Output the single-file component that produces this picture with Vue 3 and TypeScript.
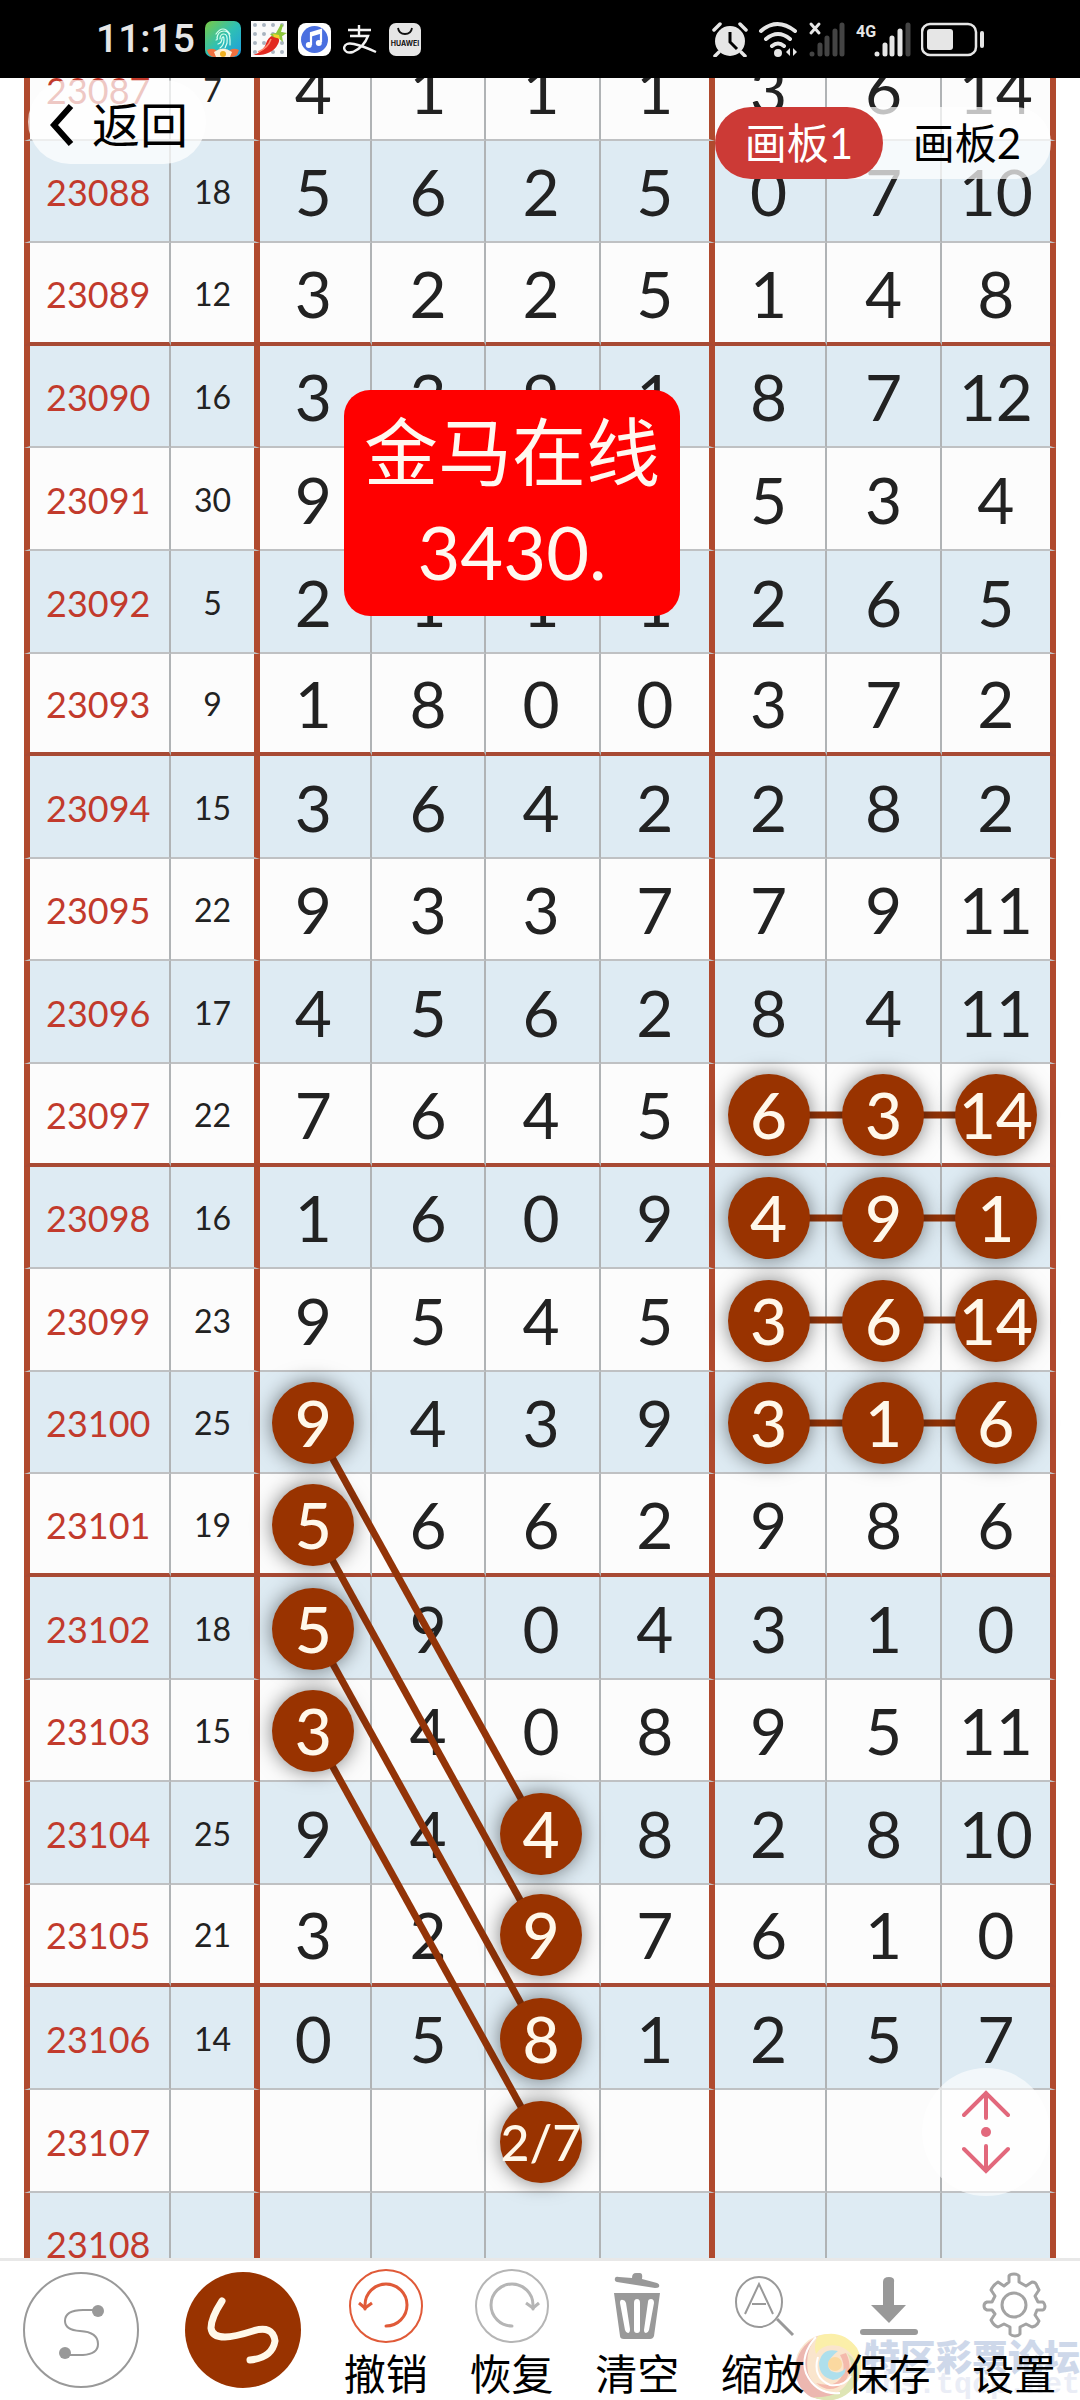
<script setup lang="ts">
interface Row {
  issue: string
  sum: string
  cells: string[]
}

interface Point {
  row: number
  col: number
}

const source: [string, string, string][] = [
  ['23087', '7', '4 1 1 1 3 6 14'],
  ['23088', '18', '5 6 2 5 0 7 10'],
  ['23089', '12', '3 2 2 5 1 4 8'],
  ['23090', '16', '3 3 9 1 8 7 12'],
  ['23091', '30', '9 8 7 6 5 3 4'],
  ['23092', '5', '2 1 1 1 2 6 5'],
  ['23093', '9', '1 8 0 0 3 7 2'],
  ['23094', '15', '3 6 4 2 2 8 2'],
  ['23095', '22', '9 3 3 7 7 9 11'],
  ['23096', '17', '4 5 6 2 8 4 11'],
  ['23097', '22', '7 6 4 5 6 3 14'],
  ['23098', '16', '1 6 0 9 4 9 1'],
  ['23099', '23', '9 5 4 5 3 6 14'],
  ['23100', '25', '9 4 3 9 3 1 6'],
  ['23101', '19', '5 6 6 2 9 8 6'],
  ['23102', '18', '5 9 0 4 3 1 0'],
  ['23103', '15', '3 4 0 8 9 5 11'],
  ['23104', '25', '9 4 4 8 2 8 10'],
  ['23105', '21', '3 2 9 7 6 1 0'],
  ['23106', '14', '0 5 8 1 2 5 7'],
  ['23107', '', '- - 2/7 - - - -'],
  ['23108', '', '- - - - - - -'],
]

const rows: Row[] = source.map(([issue, sum, cells]) => ({
  issue,
  sum,
  cells: cells.split(' ').map((c) => (c === '-' ? '' : c)),
}))

// Each stroke joins two marked cells; row and col are indexes into the table
const strokes: [Point, Point][] = [
  ...[10, 11, 12, 13].map((row): [Point, Point] => [{ row, col: 4 }, { row, col: 6 }]),
  ...[13, 14, 15, 16].map((row): [Point, Point] => [{ row, col: 0 }, { row: row + 4, col: 2 }]),
]

const marked = new Set<string>()
for (const [a, b] of strokes) {
  marked.add(`${a.row}:${a.col}`)
  marked.add(`${b.row}:${b.col}`)
  if (a.row === b.row) marked.add(`${a.row}:5`)
}
const isMarked = (row: number, col: number): boolean => marked.has(`${row}:${col}`)

const centers = ['28%', '39%', '50%', '61%', '72%', '83%', '94%']
const centerY = (row: number): number => Math.round((row * 513) / 5) + 51

const tools = [
  { id: 'undo', label: '撤销' },
  { id: 'redo', label: '恢复' },
  { id: 'clear', label: '清空' },
  { id: 'zoom', label: '缩放' },
  { id: 'save', label: '保存' },
  { id: 'settings', label: '设置' },
]
</script>

<template>
  <div class="app">
    <header class="status">
      <div class="status-side">
        <span class="clock">11:15</span>
        <svg class="s36" viewBox="0 0 36 36">
          <defs>
            <linearGradient id="fp" x1="0" y1="0" x2="1" y2="1">
              <stop offset="0" stop-color="#7ac943" />
              <stop offset="0.5" stop-color="#2fc0b4" />
              <stop offset="1" stop-color="#1e9be0" />
            </linearGradient>
          </defs>
          <rect width="36" height="36" rx="7" fill="url(#fp)" />
          <g fill="none" stroke="#d8fff0" stroke-width="1.2" stroke-linecap="round">
            <path d="M11 13q7-10 14 0M12 17q1-7 7-7t6 9v5M15 18q0-5 4-5t3 9l-2 5M13 23q4-1 4-6 2-3 2 2 0 5-4 8M11 19q2 0 1-3" />
          </g>
          <path d="M2 29q6-3 10 1 6-4 12 0 4-4 10-1l-2 5q-3 2-6 2H9q-5 0-7-7z" fill="#f2703f" />
          <path d="M9 31q9-7 18 0l-2 5H11z" fill="#fff0d8" />
          <circle cx="18" cy="33" r="3" fill="#f0b020" />
        </svg>
        <svg class="s36" viewBox="0 0 36 36">
          <rect width="36" height="36" fill="#fafafa" />
          <g fill="#a9b4c0">
            <circle v-for="n in 16" :key="n" :cx="4 + ((n - 1) % 4) * 9" :cy="4 + Math.floor((n - 1) / 4) * 9" r="2" />
          </g>
          <path d="M2 34q11-3 14-14 3-6 9-6 5 3 2 9-6 12-25 11z" fill="#e2281f" />
          <path d="M7 31q10-4 13-13" fill="none" stroke="#ff8a70" stroke-width="1.5" />
          <path d="M19 13l6-1 5-9 2 1-2 7 6 1-5 3 1 6-5-4-5-1z" fill="#8cc63a" />
          <path d="M22 13l6 1 1 4-6-2z" fill="#f3d22d" />
        </svg>
        <svg class="s36" viewBox="0 0 36 36">
          <rect x="1" y="2" width="33" height="33" rx="8" fill="#fff" />
          <circle cx="17.500" cy="18.500" r="13.500" fill="#4a6fe0" />
          <path d="M14 24V12l10-3v12" fill="none" stroke="#fff" stroke-width="2.200" />
          <path d="M14 14l10-3" stroke="#fff" stroke-width="3" />
          <circle cx="11.800" cy="24" r="3" fill="#fff" />
          <circle cx="21.800" cy="22" r="3" fill="#fff" />
        </svg>
        <svg class="s36" viewBox="0 0 36 36" fill="none" stroke="#f2f2f2" stroke-width="2.400">
          <path d="M5 9h23M16 4v10M7 15h18q-4 11-15 16-8 2-9-4 1-6 10-4 9 2 22 8" />
        </svg>
        <svg class="s36" viewBox="0 0 36 36">
          <rect x="0" y="2" width="32" height="33" rx="7" fill="#e6e6e6" />
          <path d="M9 7q1 6 7 6t7-6" fill="none" stroke="#111" stroke-width="1.800" />
          <text x="16" y="25" text-anchor="middle" class="brand">HUAWEI</text>
        </svg>
      </div>
      <div class="status-side">
        <svg class="s36" viewBox="0 0 36 36">
          <circle cx="18" cy="20" r="15" fill="#e6e6e6" />
          <path d="M2 9l6-6M34 9l-6-6M7 31l-4 4M29 31l4 4" stroke="#e6e6e6" stroke-width="3.500" stroke-linecap="round" />
          <path d="M18 11v10l7 7" fill="none" stroke="#000" stroke-width="3" />
        </svg>
        <svg class="s40" viewBox="0 0 40 36" fill="none" stroke="#e6e6e6" stroke-width="4" stroke-linecap="round">
          <path d="M3 10q16-14 34 0M8 18q12-10 24 0M14 25q6-5 12 0" />
          <circle cx="20" cy="32" r="2" />
          <path d="M32 27v8l-4-4zM35 35v-8l4 4z" fill="#e6e6e6" stroke="none" />
        </svg>
        <svg class="s38" viewBox="0 0 38 36" stroke="#444" stroke-width="5" stroke-linecap="round">
          <path d="M4 33v0M12 24v9M19 17v16M27 10v23M34 4v29" />
          <path d="M3 3l8 9M11 3l-8 9" stroke="#e6e6e6" stroke-width="3" />
        </svg>
        <svg class="s55" viewBox="0 0 55 36" stroke="#e6e6e6" stroke-width="5" stroke-linecap="round">
          <text x="0" y="16" class="net">4G</text>
          <path d="M21 33v0M29 24v9M36 17v16M44 10v23" />
          <path d="M52 4v29" stroke="#444" />
        </svg>
        <svg class="s63" viewBox="0 0 63 36">
          <rect x="1" y="3" width="54" height="31" rx="8" fill="none" stroke="#e6e6e6" stroke-width="2.500" />
          <rect x="6" y="8" width="26" height="21" rx="3" fill="#e6e6e6" />
          <rect x="59" y="10" width="4" height="17" rx="2" fill="#e6e6e6" />
        </svg>
      </div>
    </header>

    <main class="board">
      <div class="sheet">
        <table>
          <colgroup>
            <col class="c-issue" />
            <col class="c-sum" />
            <col class="c-a" />
            <col class="c-b" />
            <col class="c-b" />
            <col class="c-b" />
            <col class="c-a" />
            <col class="c-b" />
            <col class="c-b" />
          </colgroup>
          <tbody>
            <tr v-for="(row, r) in rows" :key="row.issue">
              <th scope="row">{{ row.issue }}</th>
              <td class="sum">{{ row.sum }}</td>
              <td v-for="(cell, c) in row.cells" :key="c">
                <span v-if="isMarked(r, c)" class="mark" :class="{ long: cell.length > 2 }">{{ cell }}</span>
                <template v-else>{{ cell }}</template>
              </td>
            </tr>
          </tbody>
        </table>
        <svg class="strokes" aria-hidden="true">
          <line
            v-for="([a, b], i) in strokes"
            :key="i"
            :x1="centers[a.col]"
            :y1="centerY(a.row)"
            :x2="centers[b.col]"
            :y2="centerY(b.row)"
          />
        </svg>
      </div>

      <button class="back" type="button">
        <svg viewBox="0 0 24 44"><path d="M21 3L4 22l17 19" fill="none" stroke="#000" stroke-width="6" /></svg>
        返回
      </button>

      <div class="tabs" role="tablist">
        <button class="tab active" type="button" role="tab" aria-selected="true">画板1</button>
        <button class="tab" type="button" role="tab" aria-selected="false">画板2</button>
      </div>

      <div class="note">
        <div>金马在线</div>
        <div>3430.</div>
      </div>

      <button class="scroller" type="button" aria-label="滚动">
        <svg viewBox="0 0 48 84" fill="none" stroke="#e2687c" stroke-width="4" stroke-linecap="round">
          <path d="M24 28V3M2 25L24 3l22 22M24 56v24M2 59l22 22 22-22" />
          <circle cx="24" cy="42" r="5" fill="#e2687c" stroke="none" />
        </svg>
      </button>
    </main>

    <footer class="toolbar">
      <div class="watermark" aria-hidden="true">
        <svg viewBox="0 0 72 72">
          <circle cx="36" cy="36" r="33" fill="#fae3c8" />
          <path d="M26 5Q4 16 3 40q2 18 16 26 18 6 30-4-26 0-33-20Q12 18 26 5z" fill="#eab0a8" />
          <path d="M26 5q24-8 39 12 8 16 2 28-2-24-20-30-16-3-23 8-3-10 2-18z" fill="#fbeea0" />
          <path d="M67 45q-6 20-26 24-12 1-20-3 30 2 38-22 2-12-4-22 12 8 12 23z" fill="#dbe3ad" />
          <path d="M54 22q8 16-2 30-14 12-28 0 22 6 27-10 2-10-3-18z" fill="#f3b3a4" />
          <path d="M46 20q-16-4-19 12 0 14 14 17 12-2 13-12-7 7-15 3-8-8 7-20z" fill="#a6dcea" />
          <circle cx="43" cy="33" r="7" fill="#fbd596" />
          <path d="M24 6Q8 24 14 42q10 22 34 20M26 26q-6 20 12 28 14 2 21-9" fill="none" stroke="#fff" stroke-width="2" />
        </svg>
        <div class="wm-text">
          <span class="wm-name">特区彩票论坛</span>
          <span class="wm-url">bbs.tqcp.net</span>
        </div>
      </div>

      <div class="modes">
        <button class="mode" type="button" aria-label="连线">
          <svg viewBox="0 0 116 116">
            <circle cx="58" cy="58" r="57" fill="#fff" stroke="#999" stroke-width="2" />
            <path d="M75 38H60Q42 38 42 49q0 9 15 10 18 1 18 13 0 10-15 11H42" fill="none" stroke="#999" stroke-width="2" />
            <circle cx="75" cy="39" r="6" fill="#999" />
            <circle cx="42" cy="81" r="6" fill="#999" />
          </svg>
        </button>
        <button class="mode" type="button" aria-label="画笔">
          <svg viewBox="0 0 116 116">
            <circle cx="58" cy="58" r="58" fill="#993300" />
            <path d="M37 29Q26 46 26 56q1 9 14 9 9 0 28-6 20-6 22 10-3 17-25 19" fill="none" stroke="#fff8e8" stroke-width="7" stroke-linecap="round" />
          </svg>
        </button>
      </div>

      <button v-for="t in tools" :key="t.id" class="tool" type="button">
        <svg viewBox="0 0 80 76" fill="none">
          <g v-if="t.id === 'undo'" stroke="#e05a38" stroke-width="2">
            <circle cx="40" cy="38" r="36" />
            <path d="M40 58a21 21 0 1 0-21-21v4" stroke-width="3" stroke-linecap="round" />
            <path d="M13 35l6 5 7-5-7 5z" stroke-width="3" />
          </g>
          <g v-else-if="t.id === 'redo'" stroke="#b5b5b5" stroke-width="2">
            <circle cx="40" cy="38" r="36" />
            <path d="M40 58a21 21 0 1 1 21-21v4" stroke-width="3" stroke-linecap="round" />
            <path d="M54 35l7 5 6-5-6 5z" stroke-width="3" />
          </g>
          <g v-else-if="t.id === 'clear'" fill="#999">
            <path d="M18 10q1-2 4-1l13 1q0-5 4-5h4q3 0 2 6l15 4q3 1 2 4-1 1-4 1L20 14q-3-1-2-4z" />
            <path fill-rule="evenodd" d="M17 25h46l-6 43q-1 3-4 3H27q-4 0-4-3zM26 32q-3-1-3 3l5 27q1 3 3 3t2-4l-4-26q-1-3-3-3zM40 31q-3 0-3 4v27q0 3 3 3t3-3V35q0-4-3-4zM54 31q-3 0-3 3l-4 28q0 3 2 3t3-3l5-27q0-4-3-4z" />
          </g>
          <g v-else-if="t.id === 'zoom'" stroke="#999" stroke-width="2">
            <ellipse cx="36" cy="34" rx="23" ry="25" />
            <path d="M22 46l14-30 14 30M29 36h14" />
            <path d="M54 51l16 16" stroke-width="3" />
          </g>
          <g v-else-if="t.id === 'save'" fill="#999">
            <path d="M34 14q0-5 6-5t5 5v23h12L40 55 22 37h12z" />
            <rect x="11" y="61" width="58" height="6" rx="3" />
          </g>
          <g v-else stroke="#a3a3a3" stroke-width="3" stroke-linejoin="round">
            <path d="M35 14V8q1-2 5-2t5 2v6l7 4 6-4q4 0 5 4l2 4-4 6 3 6h5q2 2 2 4 0 3-2 4h-6l-2 5 4 6q-1 3-4 5l-3 1-6-3-6 3v7q-2 2-5 2t-5-2v-7l-6-3-6 3q-4-1-7-7l4-6-3-4h-5q-3-1-3-4t3-4h5l3-6-4-6q2-5 7-8l6 4z" />
            <circle cx="40" cy="37" r="12" />
          </g>
        </svg>
        {{ t.label }}
      </button>
    </footer>
  </div>
</template>

<style>
body {
  margin: 0;
  background: #fff;
}
</style>

<style scoped>
.app {
  display: flex;
  flex-direction: column;
  height: 100vh;
  overflow: hidden;
  background: #fff;
  font-family: Lato, "Noto Sans CJK SC", sans-serif;
  color: #000;
}

button {
  border: 0;
  padding: 0;
  background: none;
  font: inherit;
  color: inherit;
  cursor: pointer;
}

svg {
  display: block;
}

.status {
  flex: none;
  display: flex;
  justify-content: space-between;
  align-items: center;
  height: 78px;
  padding: 0 96px;
  background: #000;
}

.status-side {
  display: flex;
  align-items: center;
  gap: 10px;
}

.clock {
  font: 500 39px/40px Roboto, sans-serif;
  color: #e6e6e6;
}

.s36 { width: 36px; height: 36px; }
.s40 { width: 40px; height: 36px; }
.s38 { width: 38px; height: 36px; }
.s55 { width: 55px; height: 36px; }
.s63 { width: 63px; height: 36px; }

.brand {
  font: 700 7px Inter, sans-serif;
  fill: #111;
}

.net {
  font: 700 16px Roboto, sans-serif;
  fill: #e6e6e6;
  stroke: none;
}

.board {
  position: relative;
  flex: 1;
  min-height: 0;
  overflow: hidden;
}

.sheet {
  position: relative;
  margin: -40px 24px 0;
}

table {
  width: 100%;
  table-layout: fixed;
  border-collapse: separate;
  border-spacing: 0;
}

.c-issue { width: 147px; }
.c-sum { width: 88px; }
.c-a { width: 112px; }
.c-b { width: 114px; }

th,
td {
  box-sizing: border-box;
  height: 103px;
  padding: 2px 0 0;
  border-right: 2px solid #b0b3b5;
  border-bottom: 2px solid #bfc1c3;
  background: #fcfcfc;
  text-align: center;
  vertical-align: middle;
  font-size: 64px;
  line-height: 80px;
  font-weight: 400;
  color: #222;
}

tr:nth-child(5n + 2) > *,
tr:nth-child(5n + 4) > * {
  height: 102px;
}

tr:nth-child(even) > * {
  background: #deebf3;
}

tr:nth-child(4n + 3) > * {
  border-bottom: 4px solid #a84a34;
}

th {
  border-left: 6px solid #b04a2e;
  font-size: 36px;
  color: #c23a2c;
}

td.sum {
  font-size: 32px;
}

th,
td:nth-child(3),
td:nth-child(5),
td:nth-child(7) {
  padding-right: 3px;
}

td:nth-child(2),
td:nth-child(6),
td:nth-child(9) {
  border-right: 6px solid #b04a2e;
}

.mark {
  position: relative;
  z-index: 2;
  display: block;
  width: 82px;
  height: 82px;
  margin: 0 auto;
  border-radius: 50%;
  background: #993300;
  box-shadow: 0 0 20px rgba(0, 0, 0, 0.5);
  font-weight: 500;
  line-height: 82px;
  color: #fff8ea;
}

.mark.long {
  font-size: 50px;
}

.strokes {
  position: absolute;
  z-index: 1;
  inset: 0;
  width: 100%;
  height: 100%;
}

.strokes line {
  stroke: #933408;
  stroke-width: 7px;
}

.back {
  position: absolute;
  z-index: 3;
  top: 2px;
  left: 28px;
  display: flex;
  align-items: center;
  gap: 18px;
  box-sizing: border-box;
  height: 84px;
  padding: 6px 18px 0 22px;
  border-radius: 42px;
  background: rgba(255, 255, 255, 0.72);
  font-size: 48px;
  line-height: 78px;
}

.back svg {
  width: 24px;
  height: 44px;
}

.tabs {
  position: absolute;
  z-index: 3;
  top: 29px;
  right: 29px;
  display: flex;
  border-radius: 36px;
  background: rgba(255, 255, 255, 0.72);
}

.tab {
  width: 168px;
  height: 72px;
  border-radius: 36px;
  font-size: 42px;
  line-height: 72px;
}

.tab.active {
  background: #cc3a36;
  color: #fff;
}

.note {
  position: absolute;
  z-index: 3;
  top: 312px;
  left: 344px;
  box-sizing: border-box;
  width: 336px;
  padding: 12px 0 14px;
  border-radius: 26px;
  background: #f00;
  text-align: center;
  font-size: 74px;
  line-height: 100px;
  color: #fff8f0;
}

.scroller {
  position: absolute;
  z-index: 3;
  right: 30px;
  bottom: 62px;
  display: flex;
  align-items: center;
  justify-content: center;
  width: 128px;
  height: 128px;
  border-radius: 50%;
  background: rgba(255, 255, 255, 0.6);
}

.scroller svg {
  width: 48px;
  height: 84px;
}

.toolbar {
  position: relative;
  flex: none;
  display: flex;
  align-items: flex-start;
  box-sizing: border-box;
  height: 142px;
  padding: 7px 3px 0 23px;
  border-top: 3px solid #e8e8e8;
  background: #fff;
}

.modes {
  display: flex;
  gap: 46px;
  margin-right: 22px;
  padding-top: 4px;
}

.mode svg {
  width: 116px;
  height: 116px;
}

.tool {
  position: relative;
  z-index: 1;
  flex: 1;
  display: flex;
  flex-direction: column;
  align-items: center;
  font-size: 42px;
  line-height: 60px;
  white-space: nowrap;
}

.tool svg {
  width: 80px;
  height: 76px;
}

.watermark {
  position: absolute;
  right: 0;
  bottom: 0;
  display: flex;
  align-items: center;
  height: 66px;
  opacity: 0.9;
}

.watermark svg {
  width: 72px;
  height: 72px;
}

.wm-text {
  display: flex;
  flex-direction: column;
}

.wm-name {
  font: 900 36px/36px "Noto Sans CJK SC", sans-serif;
  color: #c9d4e8;
}

.wm-url {
  font: 700 30px/24px "Liberation Mono", monospace;
  color: #e8ecf6;
}
</style>
